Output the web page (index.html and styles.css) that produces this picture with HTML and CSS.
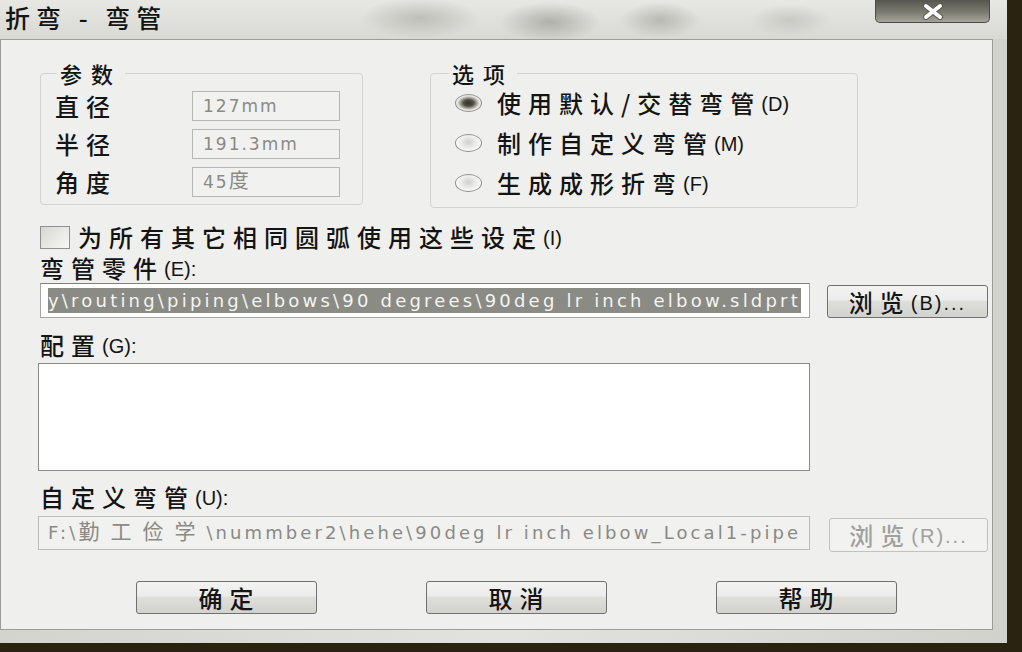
FILE: index.html
```html
<!DOCTYPE html>
<html>
<head>
    <title>折弯 - 弯管</title>
    <link rel="stylesheet" href="styles.css">
</head>
<body>

<div class="window">
    <div class="titlebar">
        <span class="title">折弯 - 弯管</span>
        <div class="closeBtn">
            <svg width="24" height="17" viewBox="0 0 24 17">
                <path d="M5 3 L19 14 M19 3 L5 14" stroke="#5a5a52" stroke-width="6" stroke-linecap="round"/>
                <path d="M5 3 L19 14 M19 3 L5 14" stroke="#ffffff" stroke-width="4" stroke-linecap="round"/>
            </svg>
        </div>
    </div>

    <div class="panel">
        <div class="groups">
            <fieldset class="group paramGroup">
                <legend>参数</legend>
                <div class="paramRow">
                    <span class="paramLabel">直径</span>
                    <div class="paramBox">127mm</div>
                </div>
                <div class="paramRow">
                    <span class="paramLabel">半径</span>
                    <div class="paramBox">191.3mm</div>
                </div>
                <div class="paramRow">
                    <span class="paramLabel">角度</span>
                    <div class="paramBox">45<span class="boxCjk">度</span></div>
                </div>
            </fieldset>

            <fieldset class="group optionGroup">
                <legend>选项</legend>
                <div class="optionList">
                    <div class="optionRow"><span class="radio checked"></span>使用默认/交替弯管<span class="key">(D)</span></div>
                    <div class="optionRow"><span class="radio"></span>制作自定义弯管<span class="key">(M)</span></div>
                    <div class="optionRow"><span class="radio"></span>生成成形折弯<span class="key">(F)</span></div>
                </div>
            </fieldset>
        </div>

        <div class="checkRow"><span class="checkbox"></span>为所有其它相同圆弧使用这些设定<span class="key">(I)</span></div>

        <div class="fieldLabel partLabel">弯管零件<span class="key">(E):</span></div>
        <div class="pathRow">
            <div class="pathBox"><span class="selected">y\routing\piping\elbows\90 degrees\90deg lr inch elbow.sldprt</span></div>
            <div class="btn browseBtn">浏览<span class="key dots">(B)...</span></div>
        </div>

        <div class="fieldLabel configLabel">配置<span class="key">(G):</span></div>
        <div class="listBox"></div>

        <div class="fieldLabel customLabel">自定义弯管<span class="key">(U):</span></div>
        <div class="customRow">
            <div class="customBox">F:\<span class="boxCjk wide">勤工俭学</span>\nummber2\hehe\90deg lr inch elbow_Local1-pipe</div>
            <div class="btn browseBtn disabledBtn">浏览<span class="key dots">(R)...</span></div>
        </div>

        <div class="actions">
            <div class="btn actionBtn">确定</div>
            <div class="btn actionBtn">取消</div>
            <div class="btn actionBtn">帮助</div>
        </div>
    </div>
</div>

</body>
</html>
```

FILE: styles.css
```css
body {
    margin: 0;
    background-color: #2a2311;
    font-family: "Noto Sans CJK SC", sans-serif;
    font-weight: 500;
    color: #141414;
}
.window {
    width: 1007px;
    height: 643px;
    background: linear-gradient(90deg, #d4d4cf, #e2e2de 50%, #d2d2cd);
    display: flex;
    flex-direction: column;
}
.titlebar {
    height: 39px;
    display: flex;
    align-items: flex-start;
    background:
        radial-gradient(ellipse 60px 20px at 420px 18px, rgba(70, 70, 60, 0.22), transparent),
        radial-gradient(ellipse 50px 20px at 550px 22px, rgba(70, 70, 60, 0.3), transparent),
        radial-gradient(ellipse 40px 18px at 660px 20px, rgba(70, 70, 60, 0.25), transparent),
        radial-gradient(ellipse 40px 16px at 790px 20px, rgba(70, 70, 60, 0.15), transparent),
        linear-gradient(#e7e7e3, #d9d9d4);
}
.title {
    font-size: 25px;
    line-height: 30px;
    letter-spacing: 6px;
    margin: 2px 0 0 5px;
}
.closeBtn {
    margin-left: auto;
    margin-right: 17px;
    width: 115px;
    height: 23px;
    box-sizing: border-box;
    border: 1px solid #4c4c45;
    border-top: none;
    border-radius: 0 0 5px 5px;
    background: linear-gradient(#56564e, #7a7a70 55%, #a4a49c);
    display: flex;
    justify-content: center;
    align-items: center;
}
.panel {
    width: 993px;
    height: 591px;
    box-sizing: border-box;
    background-color: #efefed;
    border: 1px solid #9c9c98;
    padding-left: 39px;
}

/* group boxes */
.groups {
    display: flex;
    align-items: flex-start;
    margin-top: 21px;
}
.group {
    margin: 0;
    min-width: 0;
    box-sizing: border-box;
    border: 1px solid #d2d2ce;
    border-radius: 4px;
}
.group legend {
    font-size: 22px;
    line-height: 24px;
    letter-spacing: 9px;
    padding: 0 3px;
}
.paramGroup {
    width: 323px;
    padding: 2px 0 3px 14px;
}
.paramGroup legend {
    margin-left: 2px;
}
.paramRow {
    display: flex;
    align-items: center;
    height: 38px;
}
.paramLabel {
    width: 137px;
    font-size: 24px;
    line-height: 28px;
    letter-spacing: 7px;
}
.paramBox {
    width: 148px;
    height: 30px;
    box-sizing: border-box;
    border: 1px solid #b6b6b2;
    background-color: #f1f1ef;
    color: #8a8a86;
    font-family: "DejaVu Sans", sans-serif;
    font-weight: normal;
    font-size: 17px;
    letter-spacing: 2px;
    line-height: 28px;
    padding-left: 10px;
}
.boxCjk {
    font-family: "Noto Sans CJK SC", sans-serif;
    font-size: 20px;
    letter-spacing: 4px;
    line-height: 1;
}
.optionGroup {
    width: 428px;
    margin-left: 67px;
    padding: 0 0 4px 24px;
}
.optionGroup legend {
    margin-left: -6px;
}
.optionList {
    margin-top: -2px;
}
.optionRow {
    display: flex;
    align-items: center;
    height: 40px;
    font-size: 24px;
    line-height: 28px;
    letter-spacing: 7px;
}
.radio {
    width: 27px;
    height: 18px;
    box-sizing: border-box;
    border: 1px solid #8e8e8a;
    border-radius: 50%;
    background: radial-gradient(ellipse at 50% 45%, #d0d0cc 0, #ececea 45%, #fafaf8 70%, #c8c8c4 100%);
    margin-right: 15px;
}
.radio.checked {
    background: radial-gradient(ellipse at center, #34342a 0, #4e4e44 28%, #9a9a90 45%, #e4e4e0 62%, #f2f2f0 80%, #c8c8c4 100%);
}
.key {
    font-family: "Liberation Sans", Arial, sans-serif;
    font-weight: normal;
    font-size: 20px;
    line-height: 1;
    letter-spacing: 0;
    margin-top: 2px;
}

/* checkbox and fields */
.checkRow {
    display: flex;
    align-items: center;
    height: 30px;
    margin-top: 14px;
    font-size: 24px;
    line-height: 28px;
    letter-spacing: 7px;
}
.checkbox {
    width: 30px;
    height: 23px;
    box-sizing: border-box;
    border: 1px solid #8f9090;
    background: linear-gradient(135deg, #d6d6d2, #f8f8f6);
    margin-right: 8px;
}
.fieldLabel {
    display: flex;
    align-items: center;
    height: 24px;
    font-size: 24px;
    line-height: 24px;
    letter-spacing: 7px;
}
.partLabel {
    margin-top: 4px;
}
.configLabel {
    margin-top: 15px;
}
.customLabel {
    margin-top: 14px;
}
.pathRow {
    display: flex;
    align-items: flex-start;
    margin-top: 3px;
}
.pathBox {
    width: 770px;
    height: 35px;
    box-sizing: border-box;
    border: 1px solid #a4a4a2;
    border-top-color: #7e7e7c;
    background-color: #ffffff;
    padding: 4px 0 0 7px;
    overflow: hidden;
    white-space: nowrap;
}
.selected {
    display: inline-block;
    background-color: #8b8b85;
    color: #f4f4f2;
    font-family: "DejaVu Sans", sans-serif;
    font-weight: normal;
    font-size: 18px;
    letter-spacing: 3.2px;
    line-height: 25px;
}
.listBox {
    width: 772px;
    height: 108px;
    margin: 6px 0 0 -2px;
    box-sizing: border-box;
    border: 1px solid #8a8a88;
    background-color: #ffffff;
}
.customRow {
    display: flex;
    align-items: flex-start;
    margin: 7px 0 0 -2px;
}
.customBox {
    width: 772px;
    height: 34px;
    box-sizing: border-box;
    border: 1px solid #bcbcb8;
    background-color: #f1f1ef;
    color: #8a8a86;
    font-family: "DejaVu Sans", sans-serif;
    font-weight: normal;
    font-size: 18px;
    letter-spacing: 3.1px;
    line-height: 32px;
    padding-left: 9px;
    overflow: hidden;
    white-space: nowrap;
}
.boxCjk.wide {
    font-size: 21px;
    letter-spacing: 11px;
}

/* buttons */
.btn {
    box-sizing: border-box;
    border: 1px solid #707070;
    border-radius: 3px;
    background: linear-gradient(#f3f3f1 0%, #ececea 45%, #dededb 50%, #d2d2ce 100%);
    font-size: 24px;
    line-height: 28px;
    letter-spacing: 7px;
    display: flex;
    align-items: center;
    justify-content: center;
}
.browseBtn {
    width: 161px;
    height: 33px;
    margin: 2px 0 0 17px;
}
.dots {
    letter-spacing: 2px;
}
.disabledBtn {
    width: 159px;
    height: 34px;
    margin-left: 19px;
    border-color: #c2c2be;
    background: #f2f2f0;
    color: #a0a09c;
}
.actions {
    display: flex;
    gap: 109px;
    margin-top: 29px;
    padding-left: 96px;
}
.actionBtn {
    width: 181px;
    height: 33px;
    padding-left: 6px;
}
```
